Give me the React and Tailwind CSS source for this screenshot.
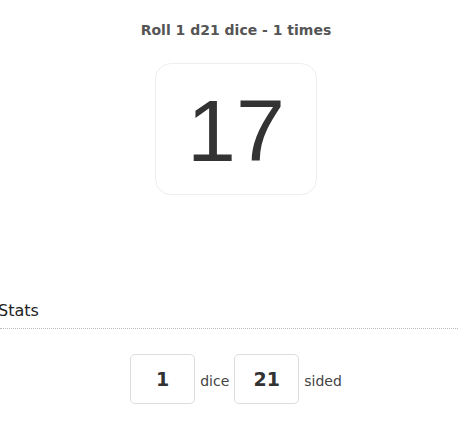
import React from 'react';

const NumBox = ({ value }) => (
  <div className="flex h-[50px] w-[65px] items-center justify-center rounded-[5px] border border-[#dddddd] bg-white text-[19px] font-bold text-[#333333]">
    {value}
  </div>
);

export default function App() {
  return (
    <div className="h-[427px] w-[458px] overflow-hidden bg-white font-['DejaVu_Sans',Verdana,sans-serif] text-[#333333]">
      <div className="flex flex-col items-center pl-[14px] pt-[22px]">
        <h1 className="text-[14px] font-bold leading-[17px] text-[#555555]">Roll 1 d21 dice - 1 times</h1>
        <div className="mt-[24px] flex h-[132px] w-[162px] items-center justify-center rounded-[16px] border border-[#eeeeee] bg-white">
          <span className="pt-[4px] font-['Liberation_Sans',Arial,sans-serif] text-[88px] leading-none text-[#333333]">17</span>
        </div>
      </div>

      <div className="mt-[106px]">
        <div className="-ml-[2px] pb-[7px] text-[16px] leading-[20px] text-[#222222]">Stats</div>
        <div className="border-b border-dotted border-[#bbbbbb]"></div>
      </div>

      <div className="mt-[25px] flex items-end justify-center gap-[5px] pl-[14px]">
        <NumBox value="1" />
        <span className="pb-[12px] text-[14px] text-[#444444]">dice</span>
        <NumBox value="21" />
        <span className="pb-[12px] text-[14px] text-[#444444]">sided</span>
      </div>
    </div>
  );
}
